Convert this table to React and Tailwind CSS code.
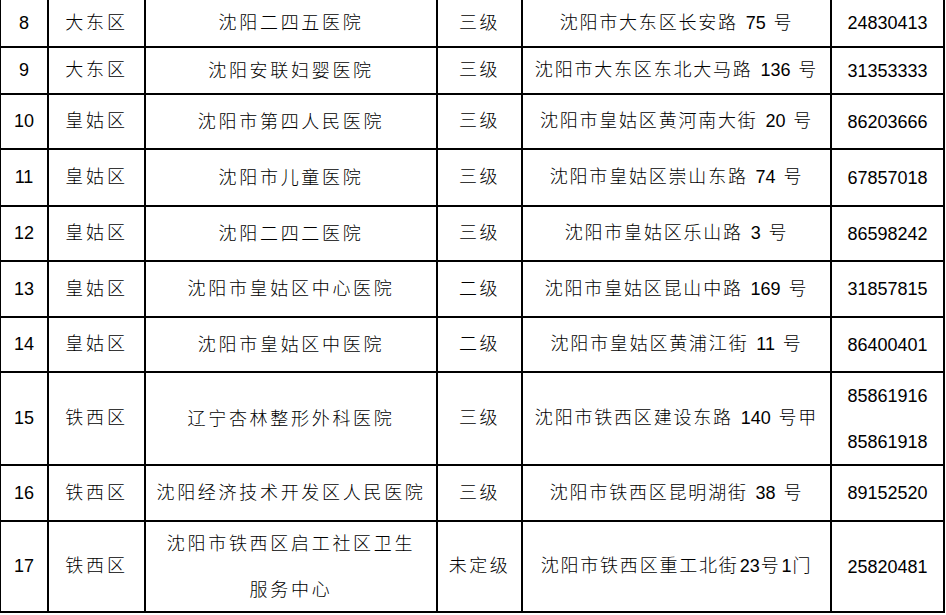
const rows = [
  { no: "8", dist: "大东区", name: ["沈阳二四五医院"], level: "三级", addr: "沈阳市大东区长安路 75 号", tel: ["24830413"] },
  { no: "9", dist: "大东区", name: ["沈阳安联妇婴医院"], level: "三级", addr: "沈阳市大东区东北大马路 136 号", tel: ["31353333"] },
  { no: "10", dist: "皇姑区", name: ["沈阳市第四人民医院"], level: "三级", addr: "沈阳市皇姑区黄河南大街 20 号", tel: ["86203666"] },
  { no: "11", dist: "皇姑区", name: ["沈阳市儿童医院"], level: "三级", addr: "沈阳市皇姑区崇山东路 74 号", tel: ["67857018"] },
  { no: "12", dist: "皇姑区", name: ["沈阳二四二医院"], level: "三级", addr: "沈阳市皇姑区乐山路 3 号", tel: ["86598242"] },
  { no: "13", dist: "皇姑区", name: ["沈阳市皇姑区中心医院"], level: "二级", addr: "沈阳市皇姑区昆山中路 169 号", tel: ["31857815"] },
  { no: "14", dist: "皇姑区", name: ["沈阳市皇姑区中医院"], level: "二级", addr: "沈阳市皇姑区黄浦江街 11 号", tel: ["86400401"] },
  { no: "15", dist: "铁西区", name: ["辽宁杏林整形外科医院"], level: "三级", addr: "沈阳市铁西区建设东路 140 号甲", tel: ["85861916", "85861918"] },
  { no: "16", dist: "铁西区", name: ["沈阳经济技术开发区人民医院"], level: "三级", addr: "沈阳市铁西区昆明湖街 38 号", tel: ["89152520"] },
  { no: "17", dist: "铁西区", name: ["沈阳市铁西区启工社区卫生", "服务中心"], level: "未定级", addr: "沈阳市铁西区重工北街23号1门", tel: ["25820481"] },
];

// split text so digits keep normal spacing
function Mixed({ text }) {
  return text.split(/(\d+)/).map((part, i) =>
    /^\d+$/.test(part) ? (
      <span key={i} className="px-[1px] font-normal tracking-normal">
        {part}
      </span>
    ) : (
      <span key={i}>{part}</span>
    )
  );
}

function Cell({ children, className = "" }) {
  return (
    <div className={`flex flex-col items-center justify-center bg-white text-center ${className}`}>
      {children}
    </div>
  );
}

export default function App() {
  return (
    <div className="h-[615px] w-[946px] overflow-hidden bg-white font-['Liberation_Sans','Noto_Sans_CJK_SC',sans-serif] text-[18px] font-light text-black">
      <div className="grid w-fit grid-cols-[46px_95px_290px_83px_307px_111px] grid-rows-[46px_45px_53px_55px_53px_54px_53px_91px_54px_89px] gap-[2px] border-b-2 border-l border-r-2 border-black bg-black">
        {rows.map((r) => (
          <div key={r.no} className="contents">
            <Cell className="font-normal">{r.no}</Cell>
            <Cell className="tracking-[2.8px]">{r.dist}</Cell>
            <Cell className="tracking-[2.7px] leading-[46px]">
              {r.name.map((n) => (
                <div key={n}>{n}</div>
              ))}
            </Cell>
            <Cell className="tracking-[2.5px]">{r.level}</Cell>
            <Cell className="tracking-[1.8px] whitespace-pre">
              <div>
                <Mixed text={r.addr} />
              </div>
            </Cell>
            <Cell className="font-normal leading-[46px]">
              {r.tel.map((t) => (
                <div key={t}>{t}</div>
              ))}
            </Cell>
          </div>
        ))}
      </div>
    </div>
  );
}
